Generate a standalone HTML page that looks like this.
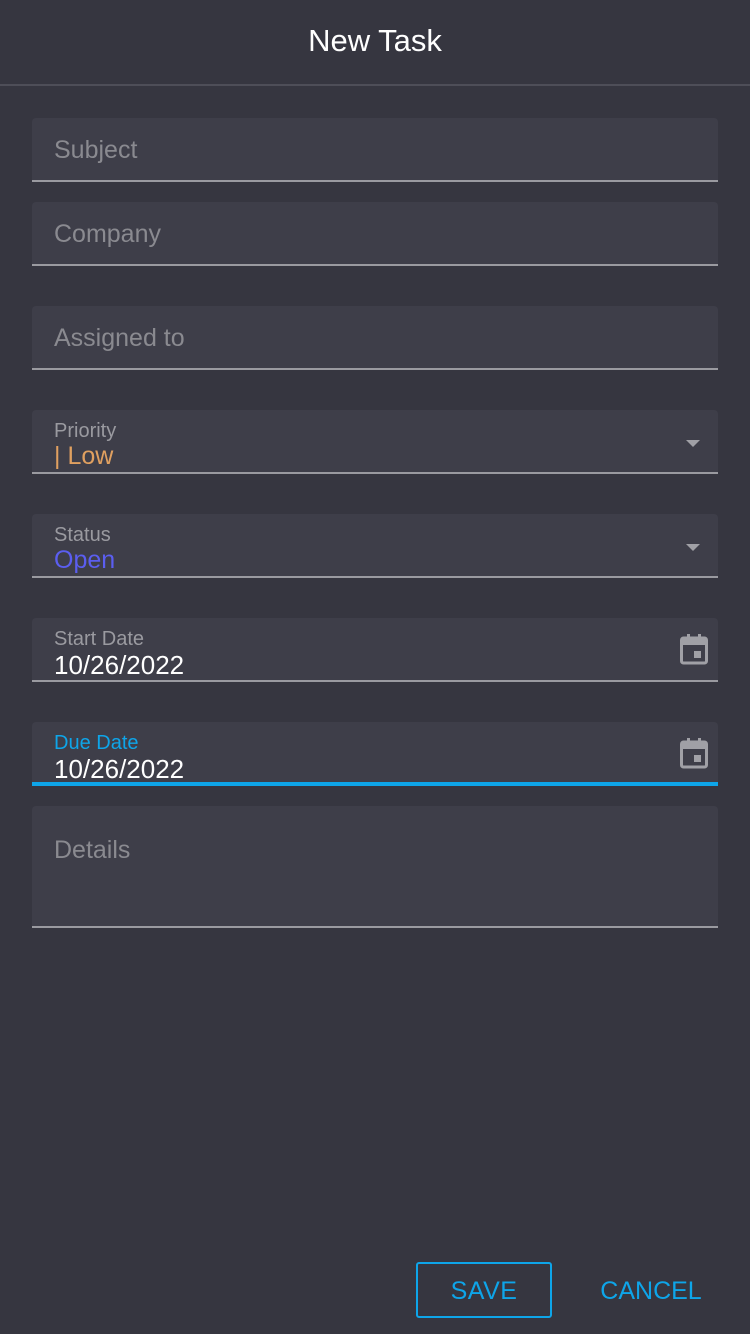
<!DOCTYPE html>
<html><head><style>
body{margin:0;width:750px;height:1334px;background:#363640;font-family:"Liberation Sans",sans-serif;position:relative;overflow:hidden}
.hdr{position:absolute;top:0;left:0;width:750px;height:84px;border-bottom:2px solid #4e4e58;color:#fff;font-size:31px;text-align:center;line-height:82px}
.f{position:absolute;left:32px;width:686px;background:#3e3e49;border-radius:4px 4px 0 0;border-bottom:2px solid #9a9aa0;box-sizing:border-box}
.ph{position:absolute;left:22px;color:#8a8a90;font-size:25px}
.lb{position:absolute;left:22px;top:10px;color:#9a9aa0;font-size:20px}
.v{position:absolute;left:22px;top:32px;font-size:25px;color:#fff}
.arr{position:absolute;right:18px;top:30px;width:0;height:0;border-left:7px solid transparent;border-right:7px solid transparent;border-top:7px solid #a0a0a6}
.cal{position:absolute;right:10px;top:16px}
</style></head><body>
<div class="hdr">New Task</div>
<div class="f" style="top:118px;height:64px"><span class="ph" style="top:18px">Subject</span></div>
<div class="f" style="top:202px;height:64px"><span class="ph" style="top:18px">Company</span></div>
<div class="f" style="top:306px;height:64px"><span class="ph" style="top:18px">Assigned to</span></div>
<div class="f" style="top:410px;height:64px"><span class="lb">Priority</span><span class="v" style="color:#e0a060">| Low</span><div class="arr"></div></div>
<div class="f" style="top:514px;height:64px"><span class="lb">Status</span><span class="v" style="color:#5b5ef0">Open</span><div class="arr"></div></div>
<div class="f" style="top:618px;height:64px"><span class="lb">Start Date</span><span class="v" style="font-size:26px">10/26/2022</span>
<svg class="cal" width="28" height="32" viewBox="0 0 28 32"><rect x="7" y="0" width="3" height="5" fill="#a0a0a6"/><rect x="18" y="0" width="3" height="5" fill="#a0a0a6"/><rect x="1.5" y="4" width="25" height="25" rx="2" fill="none" stroke="#a0a0a6" stroke-width="3"/><rect x="1" y="4" width="26" height="7" fill="#a0a0a6"/><rect x="14" y="17" width="7" height="7" fill="#a0a0a6"/></svg></div>
<div class="f" style="top:722px;height:64px;border-bottom:4px solid #0ea5e9"><span class="lb" style="color:#0ea5e9">Due Date</span><span class="v" style="font-size:26px">10/26/2022</span>
<svg class="cal" width="28" height="32" viewBox="0 0 28 32"><rect x="7" y="0" width="3" height="5" fill="#a0a0a6"/><rect x="18" y="0" width="3" height="5" fill="#a0a0a6"/><rect x="1.5" y="4" width="25" height="25" rx="2" fill="none" stroke="#a0a0a6" stroke-width="3"/><rect x="1" y="4" width="26" height="7" fill="#a0a0a6"/><rect x="14" y="17" width="7" height="7" fill="#a0a0a6"/></svg></div>
<div class="f" style="top:806px;height:122px"><span class="ph" style="top:30px">Details</span></div>
<div style="position:absolute;left:416px;top:1262px;width:136px;height:56px;box-sizing:border-box;border:2px solid #0ea5e9;border-radius:3px;color:#0ea5e9;font-size:25px;text-align:center;line-height:54px;letter-spacing:0.5px">SAVE</div>
<div style="position:absolute;left:590px;top:1262px;width:122px;height:56px;color:#0ea5e9;font-size:25px;text-align:center;line-height:58px;letter-spacing:0px">CANCEL</div>
</body></html>
